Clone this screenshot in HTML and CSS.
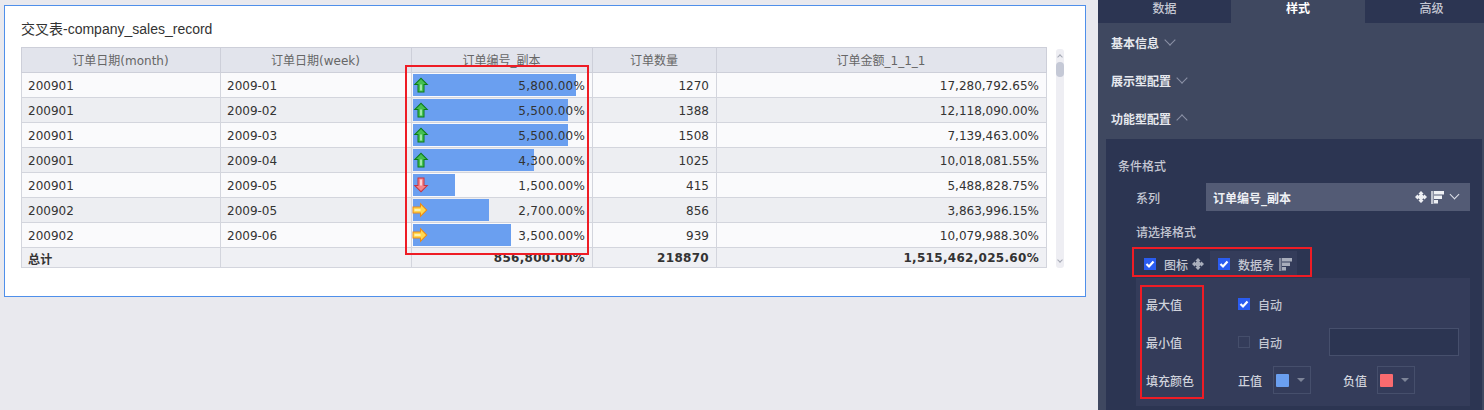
FILE: index.html
```html
<!DOCTYPE html>
<html lang="zh-CN">
<head>
	<meta charset="utf-8" />
	<title>交叉表-company_sales_record</title>
	<link rel="stylesheet" href="styles.css">
</head>
<body>
	<svg class="defs" width="0" height="0">
		<symbol id="arrow-up" viewBox="0 0 16 16">
			<path d="M8 .5 15.500 8H11.500V15.500H4.500V8H.5Z" fill="#0b7d18"/>
			<path d="M8 2 13 7H10.500V14.500H5.500V7H3Z" fill="#45bf52"/>
			<path d="M7 7.500H9V13.500H7Z" fill="#9be8a4"/>
		</symbol>
		<symbol id="arrow-down" viewBox="0 0 16 16">
			<path d="M8 15.500 15.500 8H11.500V.5H4.500V8H.5Z" fill="#c9353f"/>
			<path d="M8 14 13 9H10.500V1.500H5.500V9H3Z" fill="#f5858b"/>
			<path d="M7 2.500H9V8.500H7Z" fill="#ffd3d5"/>
		</symbol>
		<symbol id="arrow-right" viewBox="0 0 16 16">
			<path d="M15.500 8 8 .5V4.500H.5V11.500H8V15.500Z" fill="#ee8a12"/>
			<path d="M14 8 9 3V5.500H1.500V10.500H9V13Z" fill="#ffd84f"/>
			<path d="M2.500 7H8.500V9H2.500Z" fill="#fff2b0"/>
		</symbol>
		<symbol id="icon-set" viewBox="0 0 12 12">
			<path d="M6 0 8.500 2.500 6 5 3.500 2.500ZM6 7 8.500 9.500 6 12 3.500 9.500ZM2.500 3.500 5 6 2.500 8.500 0 6ZM9.500 3.500 12 6 9.500 8.500 7 6ZM4 4H8V8H4Z" fill="currentColor"/>
		</symbol>
		<symbol id="bar-set" viewBox="0 0 13 13">
			<path d="M3 0H13V3.500H3ZM3 4.500H11V8H3ZM3 9H7V12.500H3Z" fill="currentColor"/>
			<path d="M0 0H2.500V13H0Z" fill="currentColor" opacity=".7"/>
		</symbol>
		<symbol id="tick" viewBox="0 0 12 12">
			<path d="M2.500 6 5 8.500 9.500 3.500" fill="none" stroke="#fff" stroke-width="2.200"/>
		</symbol>
	</svg>

	<main class="canvas">
		<section class="card">
			<h1 class="card-title">交叉表-company_sales_record</h1>
			<div class="table-wrap">
				<table class="grid">
					<colgroup>
						<col class="c1"><col class="c2"><col class="c3"><col class="c4"><col class="c5">
					</colgroup>
					<thead>
						<tr><th>订单日期(month)</th><th>订单日期(week)</th><th>订单编号_副本</th><th>订单数量</th><th>订单金额_1_1_1</th></tr>
					</thead>
					<tbody>
						<tr>
							<td>200901</td><td>2009-01</td>
							<td class="bar-cell"><div class="bar" style="width:163px"></div><svg class="trend"><use href="#arrow-up"/></svg><span class="bar-val">5,800.00%</span></td>
							<td class="num">1270</td><td class="num">17,280,792.65%</td>
						</tr>
						<tr>
							<td>200901</td><td>2009-02</td>
							<td class="bar-cell"><div class="bar" style="width:155px"></div><svg class="trend"><use href="#arrow-up"/></svg><span class="bar-val">5,500.00%</span></td>
							<td class="num">1388</td><td class="num">12,118,090.00%</td>
						</tr>
						<tr>
							<td>200901</td><td>2009-03</td>
							<td class="bar-cell"><div class="bar" style="width:155px"></div><svg class="trend"><use href="#arrow-up"/></svg><span class="bar-val">5,500.00%</span></td>
							<td class="num">1508</td><td class="num">7,139,463.00%</td>
						</tr>
						<tr>
							<td>200901</td><td>2009-04</td>
							<td class="bar-cell"><div class="bar" style="width:121px"></div><svg class="trend"><use href="#arrow-up"/></svg><span class="bar-val">4,300.00%</span></td>
							<td class="num">1025</td><td class="num">10,018,081.55%</td>
						</tr>
						<tr>
							<td>200901</td><td>2009-05</td>
							<td class="bar-cell"><div class="bar" style="width:42px"></div><svg class="trend"><use href="#arrow-down"/></svg><span class="bar-val">1,500.00%</span></td>
							<td class="num">415</td><td class="num">5,488,828.75%</td>
						</tr>
						<tr>
							<td>200902</td><td>2009-05</td>
							<td class="bar-cell"><div class="bar" style="width:76px"></div><svg class="trend trend-side"><use href="#arrow-right"/></svg><span class="bar-val">2,700.00%</span></td>
							<td class="num">856</td><td class="num">3,863,996.15%</td>
						</tr>
						<tr>
							<td>200902</td><td>2009-06</td>
							<td class="bar-cell"><div class="bar" style="width:98px"></div><svg class="trend trend-side"><use href="#arrow-right"/></svg><span class="bar-val">3,500.00%</span></td>
							<td class="num">939</td><td class="num">10,079,988.30%</td>
						</tr>
					</tbody>
					<tfoot>
						<tr><td>总计</td><td></td><td class="num">856,800.00%</td><td class="num">218870</td><td class="num">1,515,462,025.60%</td></tr>
					</tfoot>
				</table>
				<div class="scroller"><span class="scroll-up"></span><span class="scroll-thumb"></span><span class="scroll-down"></span></div>
				<div class="mark mark-column"></div>
			</div>
		</section>
	</main>

	<aside class="panel">
		<nav class="tabs">
			<span class="tab">数据</span>
			<span class="tab tab-on">样式</span>
			<span class="tab">高级</span>
		</nav>
		<div class="group"><span>基本信息</span><i class="chev"></i></div>
		<div class="group"><span>展示型配置</span><i class="chev"></i></div>
		<div class="group"><span>功能型配置</span><i class="chev chev-up"></i></div>

		<div class="config">
			<div class="config-title">条件格式</div>
			<div class="series">
				<label class="series-label">系列</label>
				<div class="select">
					<span>订单编号_副本</span>
					<svg class="select-ico"><use href="#icon-set"/></svg>
					<svg class="select-ico select-bar"><use href="#bar-set"/></svg>
					<i class="chev chev-small"></i>
				</div>
			</div>
			<div class="format-label">请选择格式</div>
			<div class="formats">
				<div class="format">
					<span class="check"><svg><use href="#tick"/></svg></span>
					<span>图标</span>
					<svg class="format-ico"><use href="#icon-set"/></svg>
				</div>
				<div class="format format-on">
					<span class="check"><svg><use href="#tick"/></svg></span>
					<span>数据条</span>
					<svg class="format-ico format-bar"><use href="#bar-set"/></svg>
				</div>
				<div class="mark mark-format"></div>
			</div>
			<div class="bar-opts">
				<div class="opt">
					<span class="opt-name">最大值</span>
					<span class="check"><svg><use href="#tick"/></svg></span>
					<span class="opt-auto">自动</span>
				</div>
				<div class="opt">
					<span class="opt-name">最小值</span>
					<span class="check check-off"></span>
					<span class="opt-auto">自动</span>
					<div class="opt-input"></div>
				</div>
				<div class="opt">
					<span class="opt-name">填充颜色</span>
					<span class="sign">正值</span>
					<div class="picker"><b class="swatch swatch-pos"></b><i class="caret"></i></div>
					<span class="sign sign-neg">负值</span>
					<div class="picker"><b class="swatch swatch-neg"></b><i class="caret"></i></div>
				</div>
				<div class="mark mark-labels"></div>
			</div>
		</div>
	</aside>
</body>
</html>
```

FILE: styles.css
```css
* {box-sizing:border-box;}
html, body {height:100%;}
body {margin:0; display:flex; overflow:hidden; background:#e9e9ee; font:12px 'DejaVu Sans','Noto Sans CJK SC',sans-serif; color:#333;}
.defs {position:absolute;}

.canvas {width:1098px; flex:none; padding:5px 12px 0 4px;}
.card {height:292px; padding:14px 16px 0; background:#fff; border:1px solid #4f8fea;}
.card-title {margin:0; height:27px; font:14px/19px 'Liberation Sans','Noto Sans CJK SC',sans-serif; color:#333;}

.table-wrap {position:relative; display:flex; width:1044px;}
.grid {width:1025px; height:220px; table-layout:fixed; border-collapse:collapse; border:1px solid #c9cbd5;}
.c1 {width:199px;}
.c2 {width:191px;}
.c3 {width:181px;}
.c4 {width:124px;}
.c5 {width:330px;}
.grid th, .grid td {height:25px; padding:1px 7px 0 6px; border:1px solid #d3d5dd; white-space:nowrap;}
.grid th {padding:0 7px 1px 6px; font-weight:normal; color:#666; background:#e2e4ec; border-color:#cdcfd9;}
.grid tbody tr:nth-child(odd) td {background:#fafafc;}
.grid tbody tr:nth-child(even) td {background:#edeef2;}
.grid .num {text-align:right;}
.grid tfoot td {height:20px; font-weight:bold; letter-spacing:.3px; background:#eff0f4; border-top:1px solid #bfc1cb;}

.grid .bar-cell {position:relative; padding:0;}
.bar {height:22px; margin-left:1px; background:#6a9ff0;}
.trend {position:absolute; left:1px; top:4px; width:16px; height:16px;}
.trend-side {left:0;}
.bar-val {position:absolute; right:7px; top:6px; letter-spacing:.2px;}

.scroller {position:relative; width:8px; height:219px; margin:2px 0 0 9px; border-radius:3px; background:#eeeef3;}
.scroll-thumb {position:absolute; top:13px; left:0; width:8px; height:15px; border-radius:4px; background:#c5c9d6;}
.scroll-up, .scroll-down {position:absolute; left:2px; width:4px; height:4px; border:solid #a4a8b4; border-width:1px 0 0 1px; transform:rotate(45deg);}
.scroll-up {top:6px;}
.scroll-down {bottom:6px; transform:rotate(225deg);}

.mark {position:absolute; border:2px solid #ee1c25; pointer-events:none;}
.mark-column {left:384px; top:18px; width:184px; height:190px;}
.mark-format {left:0; top:-4px; width:180px; height:30px;}
.mark-labels {left:4px; top:7px; width:64px; height:114px;}

.panel {width:386px; flex:none; overflow:hidden; background:#3f4860; color:#c4c7d2; font-weight:500;}
.tabs {display:flex; height:23px; line-height:18px; text-align:center;}
.tab {flex:none; width:133px; background:#2c3552;}
.tab-on {width:134px; background:none; color:#fff; font-weight:bold;}

.group {display:flex; align-items:center; gap:6px; height:38px; padding-left:13px; color:#e6e8ee; font-weight:bold;}
.chev {width:8px; height:8px; margin:-4px 0 0 1px; border:solid #8b92a6; border-width:0 1px 1px 0; transform:rotate(45deg);}
.chev-up {margin-top:4px; transform:rotate(225deg);}

.config {height:272px; margin:2px 2px 0 8px; padding-top:19px; background:#2c3552;}
.config-title {height:25px; padding-left:12px; line-height:18px;}

.series {display:flex; align-items:center; height:28px; padding-left:30px;}
.series-label {width:70px;}
.select {display:flex; align-items:center; width:264px; height:28px; padding-left:7px; background:#535b75; color:#eef0f4; font-weight:bold;}
.select span {flex:1;}
.select-ico {width:12px; height:12px; color:#eef0f4;}
.select-bar {width:13px; height:13px; margin-left:4px;}
.chev-small {width:7px; height:7px; margin:-6px 12px 0 7px; border-color:#dfe2ea;}

.format-label {height:40px; padding:13px 0 0 30px; line-height:18px;}

.formats {position:relative; display:flex; height:26px; margin-left:26px; width:334px;}
.format {display:flex; align-items:center; height:26px; padding-left:12px; gap:8px;}
.format-on {width:87px; margin-left:6px; padding-left:8px; background:#343c5a;}
.format-ico {width:12px; height:12px; margin-left:-4px; color:#a8adbb;}
.format-bar {width:13px; height:13px; margin-left:-3px;}

.check {flex:none; display:block; width:12px; height:12px; background:#2a5cf0;}
.check svg {display:block; width:12px; height:12px;}
.check-off {background:none; border:1px solid #454e6b;}

.bar-opts {position:relative; width:334px; height:128px; margin:1px 0 0 30px; padding-top:7px; background:#343c5a;}
.opt {display:flex; align-items:center; height:38px; padding-left:10px;}
.opt-name {width:92px; color:#d0d3dc;}
.opt-auto {margin-left:8px;}
.opt-input {width:130px; height:28px; margin-left:47px; background:#2c3552; border:1px solid #464f6c;}
.sign {width:35px; color:#d0d3dc;}
.sign-neg {width:34px; margin-left:32px;}
.picker {display:flex; align-items:center; width:38px; height:28px; border:1px solid #464f6c; padding-left:2px;}
.swatch {width:13px; height:13px; border-radius:1px;}
.swatch-pos {background:#6a9ff0;}
.swatch-neg {background:#f96b6f;}
.caret {margin-left:8px; border:4px solid transparent; border-top:4px solid #7d8498; border-bottom:0;}
```
